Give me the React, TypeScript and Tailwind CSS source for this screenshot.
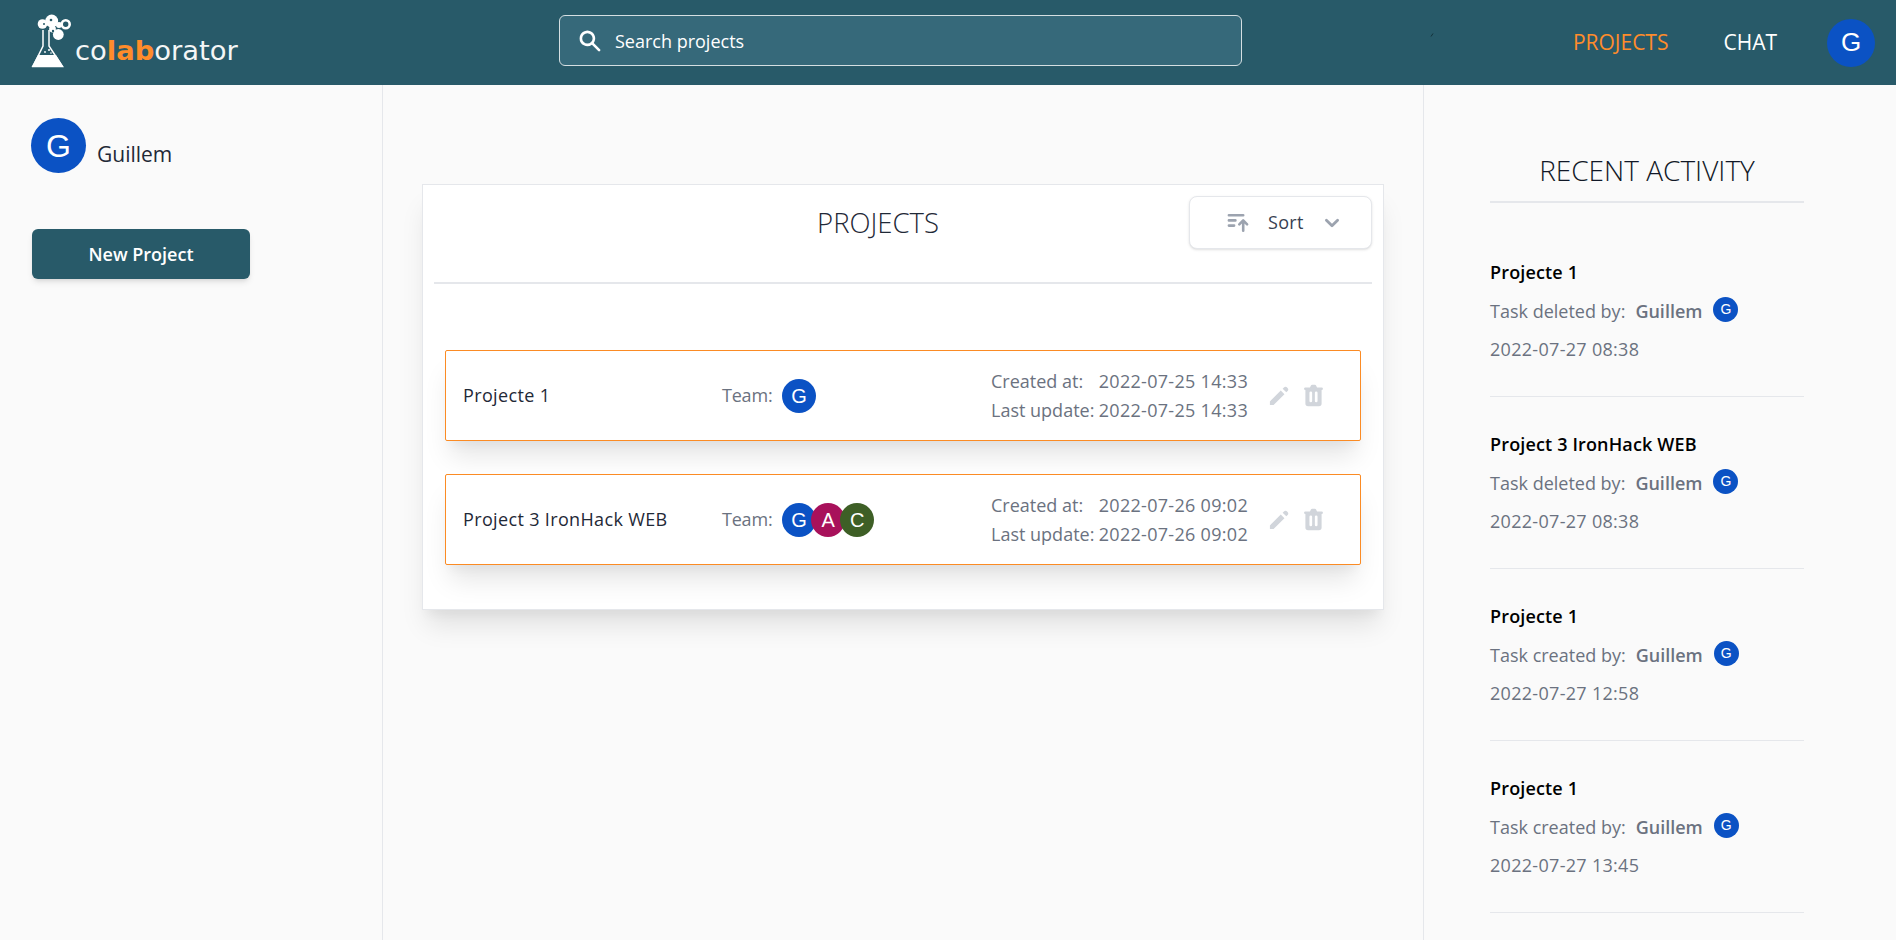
import { HiChevronDown, HiPencil, HiSearch, HiSortAscending, HiTrash } from "react-icons/hi";

const blue = "bg-[#0b52c4]";

function Avatar({ letter, color = blue, className }: { letter: string; color?: string; className: string }) {
  return (
    <div className={`flex shrink-0 items-center justify-center rounded-full font-['Liberation_Sans',sans-serif] text-white ${color} ${className}`}>
      {letter}
    </div>
  );
}

function Logo() {
  return (
    <div className="flex items-end">
      <svg width="42" height="54" viewBox="0 0 42 54" className="shrink-0">
        <path fill="none" stroke="#fff" strokeWidth="1.5" d="M12 16v16L2 52.5h29.5L18 32V16" />
        <path fill="#fff" d="M7 41h18l7.5 12H.5z" />
        <circle cx="11.5" cy="10" r="4.8" fill="#fff" />
        <circle cx="20.7" cy="7" r="6.4" fill="#fff" />
        <circle cx="27.3" cy="20.5" r="5.4" fill="#fff" />
        <circle cx="21.5" cy="15" r="3.4" fill="#fff" />
        <circle cx="28" cy="11" r="3" fill="#fff" />
        <circle cx="34.7" cy="10.3" r="4" fill="none" stroke="#fff" strokeWidth="2.6" />
        <circle cx="20" cy="6" r="1.3" fill="#285a69" />
        <circle cx="22" cy="17" r="1.2" fill="#285a69" />
        <circle cx="13" cy="10" r="1" fill="#285a69" />
        <circle cx="18" cy="36" r="1" fill="#fff" />
        <circle cx="14" cy="38" r=".9" fill="#fff" />
        <circle cx="20" cy="39" r=".8" fill="#fff" />
      </svg>
      <span className="ml-[2px] font-['DejaVu_Sans',sans-serif] text-[27.4px] leading-[34px] text-[#f4f6f6]">
        co<b className="text-[#ff8c2b]">lab</b>orator
      </span>
    </div>
  );
}

function Header() {
  return (
    <header className="relative flex h-[85px] items-center bg-[#285a69] pr-[21px] pl-[31px]">
      <div className="mb-[3px] w-[528px] shrink-0">
        <Logo />
      </div>
      <div className="mb-[4px] flex h-[51px] w-[683px] items-center rounded-md border border-[#d5dfe2] bg-[#36697a] pl-[17px] text-white">
        <HiSearch className="size-[26px]" />
        <span className="ml-[12px] pt-px text-[18px]">Search projects</span>
      </div>
      <svg width="4" height="4" viewBox="0 0 4 4" className="absolute top-[33px] left-[1430px]">
        <path d="M1 3.5 3 .5" stroke="#12303a" strokeWidth="1" />
      </svg>
      <nav className="ml-auto flex items-center text-[21px]">
        <a className="text-[#ff8c2b]">PROJECTS</a>
        <a className="ml-[55px] text-white">CHAT</a>
        <Avatar letter="G" className="ml-[50px] size-[48px] text-[26px]" />
      </nav>
    </header>
  );
}

function ProjectRow({ name, team, date }: { name: string; team: [string, string][]; date: string }) {
  return (
    <div className="flex h-[91px] items-center rounded-[2px] border border-[#fb8b24] bg-white pl-[17px] shadow-[0_20px_25px_-5px_rgba(0,0,0,0.1),0_10px_10px_-5px_rgba(0,0,0,0.04)]">
      <div className="w-[259px] shrink-0 text-[18px] font-medium tracking-[0.35px] text-[#1f2937]">{name}</div>
      <div className="flex w-[270px] shrink-0 items-center text-[18px] tracking-[-0.2px] text-[#6b7280]">
        <span className="w-[60px]">Team:</span>
        <div className="flex">
          {team.map(([letter, color]) => (
            <Avatar key={letter} letter={letter} color={color} className="-ml-[5px] size-[34px] text-[20px] first:ml-0" />
          ))}
        </div>
      </div>
      <div className="-ml-px w-[257px] shrink-0 text-[18px] leading-[29px] whitespace-nowrap text-[#6b7280]">
        <div className="flex">
          <span className="w-[109px]">Created at:</span>
          <span className="tracking-[0.3px]">{date}</span>
        </div>
        <div className="flex">
          <span className="w-[109px]">Last update:</span>
          <span className="tracking-[0.3px]">{date}</span>
        </div>
      </div>
      <div className="ml-[18px] flex items-center gap-[8px] text-[#d1d5db]">
        <HiPencil className="size-[26px]" />
        <HiTrash className="size-[27px]" />
      </div>
    </div>
  );
}

function ProjectsCard() {
  return (
    <section className="h-[426px] w-[962px] border border-[#e5e7eb] bg-white px-[11px] shadow-[0_20px_25px_-5px_rgba(0,0,0,0.1),0_10px_10px_-5px_rgba(0,0,0,0.04)]">
      <div className="relative h-[99px] border-b-2 border-[#e5e7eb]">
        <h1 className="pt-[20px] pr-[50px] text-center text-[27.5px] leading-[36px] font-light text-[#1f2937]">PROJECTS</h1>
        <button className="absolute top-[11px] right-0 flex h-[53px] w-[183px] items-center rounded-lg border border-[#e5e7eb] bg-white pl-[35px] shadow-sm">
          <HiSortAscending className="size-[26px] text-[#9ca3af]" />
          <span className="ml-[17px] text-[18px] font-medium tracking-[0.3px] text-[#374151]">Sort</span>
          <HiChevronDown className="ml-[14px] size-[28px] text-[#9ca3af]" />
        </button>
      </div>
      <div className="flex flex-col gap-[33px] px-[11px] pt-[66px]">
        <ProjectRow name="Projecte 1" team={[["G", blue]]} date="2022-07-25 14:33" />
        <ProjectRow
          name="Project 3 IronHack WEB"
          team={[["G", blue], ["A", "bg-[#a8115b]"], ["C", "bg-[#3e5f26]"]]}
          date="2022-07-26 09:02"
        />
      </div>
    </section>
  );
}

const activity = [
  { project: "Projecte 1", action: "Task deleted by:", date: "2022-07-27 08:38" },
  { project: "Project 3 IronHack WEB", action: "Task deleted by:", date: "2022-07-27 08:38" },
  { project: "Projecte 1", action: "Task created by:", date: "2022-07-27 12:58" },
  { project: "Projecte 1", action: "Task created by:", date: "2022-07-27 13:45" },
];

function RecentActivity() {
  return (
    <aside className="w-[473px] shrink-0 border-l border-[#e5e7eb] pt-[68px] pl-[66px]">
      <div className="w-[314px]">
        <h2 className="mb-[22px] h-[50px] border-b-2 border-[#e5e7eb] text-center text-[28px] leading-[34px] font-light text-[#111827]">
          RECENT ACTIVITY
        </h2>
        {activity.map((item, i) => (
          <div key={i} className="h-[172px] border-b border-[#e5e7eb] pt-[35px]">
            <div className="h-[24px] text-[18px] leading-[24px] font-semibold tracking-[0.15px] text-black">{item.project}</div>
            <div className="mt-[14px] flex h-[26px] items-center text-[18px] text-[#6b7280]">
              {item.action}
              <span className="ml-[10px] font-semibold">Guillem</span>
              <Avatar letter="G" className="mt-[-4px] ml-[11px] size-[25px] text-[14px]" />
            </div>
            <div className="mt-[13px] text-[18px] leading-[24px] tracking-[0.3px] text-[#6b7280]">{item.date}</div>
          </div>
        ))}
      </div>
    </aside>
  );
}

export default function App() {
  return (
    <div className="flex h-[940px] flex-col overflow-hidden bg-[#fafafa] font-['Open_Sans',sans-serif]">
      <Header />
      <div className="flex flex-1">
        <aside className="w-[383px] shrink-0 border-r border-[#e5e7eb] pt-[33px] pl-[31px]">
          <div className="flex items-end">
            <Avatar letter="G" className="size-[55px] text-[32px]" />
            <span className="ml-[11px] pb-[3px] text-[21px] text-[#1f2937]">Guillem</span>
          </div>
          <button className="mt-[56px] ml-px h-[50px] w-[218px] rounded-md bg-[#285a69] text-[18px] font-semibold text-white shadow-md">
            New Project
          </button>
        </aside>
        <main className="flex-1 pt-[99px] pl-[39px]">
          <ProjectsCard />
        </main>
        <RecentActivity />
      </div>
    </div>
  );
}
